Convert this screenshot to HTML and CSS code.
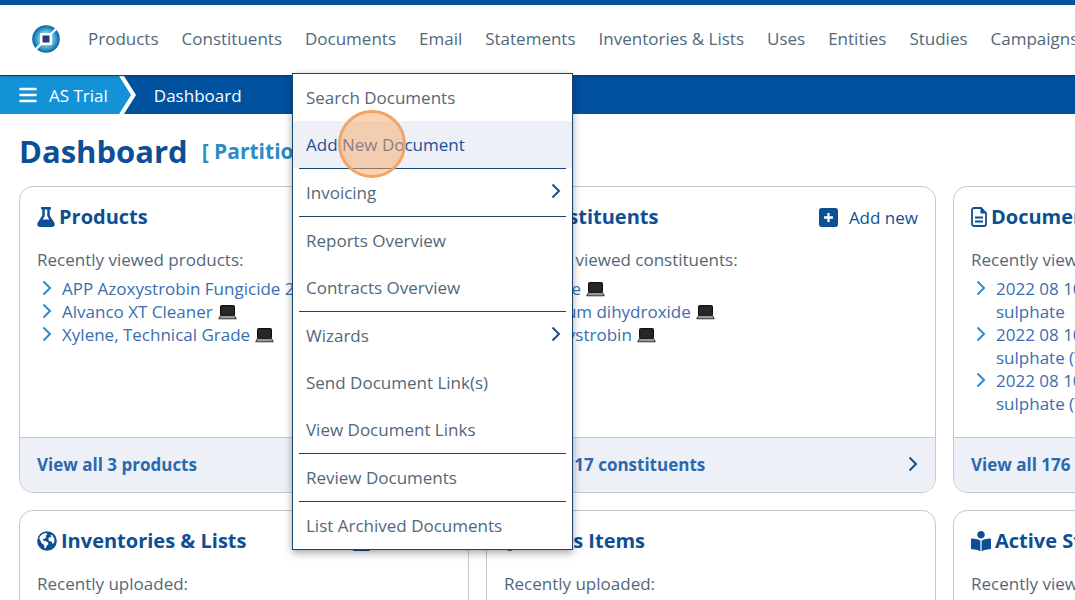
FILE: index.html
```
<!DOCTYPE html>
<html lang="en">
<head>
    <meta charset="UTF-8">
    <meta name="viewport" content="width=device-width, initial-scale=1.0">
    <title>Dashboard</title>
    <link rel="stylesheet" href="styles.css">
</head>
<body>

<!-- Shared icons -->
<svg class="sprite" aria-hidden="true">
    <symbol id="i-chevron" viewBox="0 0 10 16"><path d="M1.5 1.5 8 8l-6.5 6.5" fill="none" stroke="currentColor" stroke-width="2"/></symbol>
    <symbol id="i-plus" viewBox="0 0 18 18"><rect width="18" height="18" rx="2.5" fill="currentColor"/><path d="M9 4.8v8.4M4.8 9h8.4" stroke="#fff" stroke-width="2.2"/></symbol>
    <symbol id="i-laptop" viewBox="0 0 19 15"><rect x="2.5" y=".5" width="14" height="10" rx="1" fill="#1c1c1e" stroke="#111"/><path d="M3.5 1.5h12v8h-12z" fill="#26282b"/><path d="M2.5 10.5h14l1.8 3.3H.7z" fill="#999" stroke="#111" stroke-width=".8" stroke-linejoin="round"/></symbol>
</svg>

<header class="header">
    <a class="logo" href="#" aria-label="Home">
        <svg width="28" height="28" viewBox="0 0 28 28">
            <defs>
                <radialGradient id="ring"><stop offset=".35" stop-color="#a4d8f0"/><stop offset=".75" stop-color="#2f97cb"/><stop offset="1" stop-color="#0b5e99"/></radialGradient>
            </defs>
            <circle cx="14" cy="14" r="13.8" fill="url(#ring)"/>
            <path d="M4 24 9 19M19 9l5-5" stroke="#fff" stroke-width="2.2"/>
            <rect x="8" y="8" width="12" height="12" fill="#fff"/>
            <rect x="10.5" y="10.5" width="7" height="7" fill="#2b3a7c"/>
        </svg>
    </a>
    <nav class="nav">
        <a href="#">Products</a>
        <a href="#">Constituents</a>
        <div class="nav-item">
            <a href="#">Documents</a>
            <div class="menu">
                <a href="#">Search Documents</a>
                <a class="active" href="#">Add New Document</a>
                <hr>
                <a href="#">Invoicing <svg class="chevron"><use href="#i-chevron"/></svg></a>
                <hr>
                <a href="#">Reports Overview</a>
                <a href="#">Contracts Overview</a>
                <hr>
                <a href="#">Wizards <svg class="chevron"><use href="#i-chevron"/></svg></a>
                <a href="#">Send Document Link(s)</a>
                <a href="#">View Document Links</a>
                <hr>
                <a href="#">Review Documents</a>
                <hr>
                <a href="#">List Archived Documents</a>
            </div>
        </div>
        <a href="#">Email</a>
        <a href="#">Statements</a>
        <a href="#">Inventories &amp; Lists</a>
        <a href="#">Uses</a>
        <a href="#">Entities</a>
        <a href="#">Studies</a>
        <a href="#">Campaigns</a>
    </nav>
</header>

<div class="breadcrumb">
    <button class="account" type="button">
        <svg width="18" height="16" viewBox="0 0 18 16"><path d="M1.5 2h15M1.5 8h15M1.5 14h15" stroke="#fff" stroke-width="2.6" stroke-linecap="round"/></svg>
        AS Trial
    </button>
    <svg class="arrow" width="17" height="38" viewBox="0 0 17 38"><path d="M0 0l12 19L0 38z" fill="#1492d8"/><path d="M0 0h5l12 19L5 38H0l12-19z" fill="#fff"/></svg>
    <a href="#">Dashboard</a>
</div>

<main class="main">
    <div class="title">
        <h1>Dashboard</h1>
        <span class="partition">[ Partition: AS Trial ]</span>
    </div>

    <div class="cards">
        <section class="card">
            <div class="card-head">
                <svg width="18" height="20" viewBox="0 0 448 512"><path fill="currentColor" d="M437.2 403.5L320 215V64h8c13.3 0 24-10.7 24-24V24c0-13.3-10.7-24-24-24H120c-13.3 0-24 10.7-24 24v16c0 13.3 10.7 24 24 24h8v151L10.8 403.5C-18.5 450.6 15.3 512 70.9 512h306.2c55.7 0 89.4-61.5 60.1-108.5zM137.9 320l48.2-77.6c3.7-5.2 5.8-11.6 5.8-18.4V64h64v160c0 6.9 2.2 13.2 5.8 18.4l48.2 77.6h-172z"/></svg>
                <h2>Products</h2>
                <a class="add" href="#"><svg width="19" height="19"><use href="#i-plus"/></svg>Add new</a>
            </div>
            <p>Recently viewed products:</p>
            <ul>
                <li><svg class="chevron"><use href="#i-chevron"/></svg><a href="#">APP Azoxystrobin Fungicide 250</a></li>
                <li><svg class="chevron"><use href="#i-chevron"/></svg><a href="#">Alvanco XT Cleaner</a><svg class="laptop"><use href="#i-laptop"/></svg></li>
                <li><svg class="chevron"><use href="#i-chevron"/></svg><a href="#">Xylene, Technical Grade</a><svg class="laptop"><use href="#i-laptop"/></svg></li>
            </ul>
            <a class="card-foot" href="#">View all 3 products <svg class="chevron"><use href="#i-chevron"/></svg></a>
        </section>

        <section class="card">
            <div class="card-head">
                <svg width="22" height="20" viewBox="0 0 22 20"><path fill="currentColor" d="M11 0l9 5v10l-9 5-9-5V5z"/></svg>
                <h2>Constituents</h2>
                <a class="add" href="#"><svg width="19" height="19"><use href="#i-plus"/></svg>Add new</a>
            </div>
            <p>Recently viewed constituents:</p>
            <ul>
                <li><svg class="chevron"><use href="#i-chevron"/></svg><a href="#">Xylene</a><svg class="laptop"><use href="#i-laptop"/></svg></li>
                <li><svg class="chevron"><use href="#i-chevron"/></svg><a href="#">Calcium dihydroxide</a><svg class="laptop"><use href="#i-laptop"/></svg></li>
                <li><svg class="chevron"><use href="#i-chevron"/></svg><a href="#">Azoxystrobin</a><svg class="laptop"><use href="#i-laptop"/></svg></li>
            </ul>
            <a class="card-foot" href="#">View all 17 constituents <svg class="chevron"><use href="#i-chevron"/></svg></a>
        </section>

        <section class="card">
            <div class="card-head">
                <svg width="16" height="20" viewBox="0 0 16 20"><path d="M3 1h7l5 5v11a2 2 0 0 1-2 2H3a2 2 0 0 1-2-2V3a2 2 0 0 1 2-2z" fill="none" stroke="currentColor" stroke-width="1.8"/><path d="M9.5 1v5.5H15z" fill="currentColor"/><path d="M4 10.5h8M4 14.5h8" stroke="currentColor" stroke-width="1.8"/></svg>
                <h2>Documents</h2>
            </div>
            <p>Recently viewed documents:</p>
            <ul>
                <li><svg class="chevron"><use href="#i-chevron"/></svg><a href="#">2022 08 10 Copper<br>sulphate</a></li>
                <li><svg class="chevron"><use href="#i-chevron"/></svg><a href="#">2022 08 10 Copper<br>sulphate (V2)</a></li>
                <li><svg class="chevron"><use href="#i-chevron"/></svg><a href="#">2022 08 10 Copper<br>sulphate (V1)</a></li>
            </ul>
            <a class="card-foot" href="#">View all 176 documents <svg class="chevron"><use href="#i-chevron"/></svg></a>
        </section>

        <section class="card">
            <div class="card-head">
                <svg width="20" height="20" viewBox="0 0 20 20"><circle cx="10" cy="10" r="9.8" fill="currentColor"/><path d="M2.2 7C3.5 4 6 2.2 9 2l1.5 1-2 2 1 1.2-2 1.5-1.5.3.2 1.5 2.3.5 2.5 1.5.5 1.5-2 2-.8 2.5-1.2-.5-.5-3-2.5-2L3 9zM13.5 3.5l2 1L17.5 8l-.3 3.5-1.7 1.5-1-2.5-2.5-.5-.8-2.5 1.6-1.5 1.7.2z" fill="#fff"/></svg>
                <h2>Inventories &amp; Lists</h2>
                <a class="add" href="#"><svg width="19" height="19"><use href="#i-plus"/></svg>Add new</a>
            </div>
            <p>Recently uploaded:</p>
        </section>

        <section class="card">
            <div class="card-head">
                <svg width="20" height="20" viewBox="0 0 20 20"><path fill="currentColor" d="M0 6h7l10-5v15l-10-4h-.5L8 18.5a1 1 0 0 1-1 1.3H3.5L2 12H0z"/></svg>
                <h2>News Items</h2>
            </div>
            <p>Recently uploaded:</p>
        </section>

        <section class="card">
            <div class="card-head">
                <svg width="20" height="20" viewBox="0 0 512 512"><path fill="currentColor" d="M352 96c0-53.02-42.98-96-96-96s-96 42.98-96 96 42.98 96 96 96 96-42.98 96-96zM233.59 241.1c-59.33-36.32-155.43-46.3-203.79-49.05C13.55 191.13 0 203.51 0 219.14v222.8c0 14.33 11.59 26.28 26.49 27.05 43.66 2.29 131.99 10.68 193.04 41.43 9.37 4.72 20.48-1.71 20.48-11.87V252.56c-.01-4.67-2.32-8.95-6.42-11.46zm248.61-49.05c-48.35 2.74-144.46 12.73-203.78 49.05-4.1 2.51-6.41 6.96-6.41 11.63v245.79c0 10.19 11.14 16.63 20.54 11.9 61.04-30.72 149.32-39.11 192.97-41.4 14.9-.78 26.49-12.73 26.49-27.06V219.14c-.01-15.63-13.56-28.01-29.81-27.09z"/></svg>
                <h2>Active Studies</h2>
            </div>
            <p>Recently viewed studies:</p>
        </section>
    </div>
</main>

<div class="click-marker"></div>

</body>
</html>
```

FILE: styles.css
```
* {
    box-sizing: border-box;
}
body {
    margin: 0;
    height: 100vh;
    overflow: hidden;
    font-family: "Open Sans", "Noto Sans", sans-serif;
    font-size: 17px;
    line-height: 23px;
    color: #52687a;
    background-color: #fff;
}
a {
    color: inherit;
    text-decoration: none;
}
.sprite {
    display: none;
}
svg {
    display: block;
    flex-shrink: 0;
}
.chevron {
    width: 10px;
    height: 16px;
}

/* Header */
.header {
    position: relative;
    z-index: 2;
    display: flex;
    align-items: center;
    height: 75px;
    padding: 0 0 3px 32px;
    border-top: 5px solid #00519e;
    background-color: #fff;
    box-shadow: 0 1px 3px rgba(0, 0, 0, 0.3);
}
.nav {
    display: flex;
    gap: 23px;
    margin-left: 28px;
    white-space: nowrap;
}
.nav-item {
    position: relative;
}

/* Drop-down menu */
.menu {
    position: absolute;
    top: 46px;
    left: -13px;
    width: 281px;
    background-color: #fff;
    border: 1px solid #16466f;
    box-shadow: 0 3px 8px rgba(0, 0, 0, 0.35);
}
.menu a {
    display: flex;
    justify-content: space-between;
    align-items: center;
    height: 47px;
    padding: 0 11px 1px 13px;
}
.menu a.active {
    background-color: #edf0f6;
    color: #1b4f96;
}
.menu hr {
    height: 1px;
    margin: 0 6px;
    border: none;
    background-color: #16466f;
}
.menu .chevron {
    margin-bottom: 2px;
    color: #1b4f8c;
}

/* Breadcrumb */
.breadcrumb {
    display: flex;
    align-items: center;
    height: 39px;
    padding-top: 1px;
    color: #fff;
    background-color: #00519e;
}
.account {
    display: flex;
    align-items: center;
    gap: 12px;
    height: 38px;
    padding: 0 11px 0 19px;
    border: none;
    font: inherit;
    color: #fff;
    background-color: #1492d8;
}
.arrow {
    margin-right: 18px;
}

/* Dashboard */
.main {
    padding: 14px 19px;
}
.title {
    display: flex;
    align-items: center;
    gap: 14px;
    height: 46px;
    margin-bottom: 12px;
}
h1 {
    margin: 0;
    font-size: 31px;
    line-height: 46px;
    color: #0d4f94;
}
.partition {
    font-size: 21px;
    font-weight: bold;
    color: #2c8cc6;
}
.cards {
    display: grid;
    grid-template-columns: repeat(3, minmax(450px, 1fr));
    grid-auto-rows: 307px;
    gap: 17px;
}
.card {
    display: flex;
    flex-direction: column;
    border: 1px solid #c6c8cc;
    border-radius: 14px;
    overflow: hidden;
}
.card-head {
    display: flex;
    align-items: center;
    gap: 4px;
    padding: 15px 17px 0;
    color: #0d4f94;
}
h2 {
    margin: 0;
    font-size: 20px;
    line-height: 30px;
}
.add {
    display: flex;
    align-items: center;
    gap: 11px;
    margin-left: auto;
}
.card p {
    margin: 16px 17px 6px;
}
.card ul {
    margin: 0;
    padding: 0 17px 0 22px;
    list-style: none;
    color: #3a6eb0;
}
.card li {
    display: flex;
}
.card li .chevron {
    margin: 3px 10px 0 0;
    color: #2c8cd0;
}
.laptop {
    width: 19px;
    height: 15px;
    margin: 5px 0 0 5px;
}
.card-foot {
    display: flex;
    justify-content: space-between;
    align-items: center;
    height: 55px;
    margin-top: auto;
    padding: 0 17px 2px;
    border-top: 1px solid #c6c8cc;
    font-weight: bold;
    color: #2b69ae;
    background-color: #edf0f6;
}
.card-foot .chevron {
    color: #0d4f94;
}

/* Click highlight */
.click-marker {
    position: absolute;
    z-index: 3;
    top: 110px;
    left: 338px;
    width: 68px;
    height: 68px;
    border: 3px solid #f0a468;
    border-radius: 50%;
    background-color: rgba(250, 170, 105, 0.5);
    pointer-events: none;
}
```
